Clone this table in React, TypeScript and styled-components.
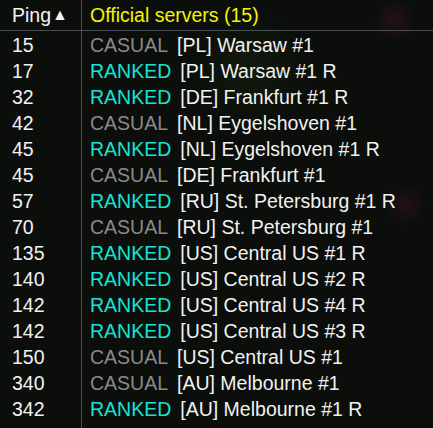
import React from "react";
import styled, { createGlobalStyle } from "styled-components";

const Global = createGlobalStyle`
  html, body { margin: 0; padding: 0; background: #0b0e0a; }
  body { width: 433px; height: 428px; overflow: hidden; }
`;

const Page = styled.div`
  width: 433px;
  height: 428px;
  display: flex;
  background:
    radial-gradient(circle at 395px 20px, rgba(90, 20, 60, 0.35) 0, rgba(90, 20, 60, 0) 22px),
    radial-gradient(circle at 405px 205px, rgba(90, 20, 60, 0.3) 0, rgba(90, 20, 60, 0) 22px),
    radial-gradient(circle at 250px 70px, rgba(30, 50, 20, 0.35) 0, rgba(30, 50, 20, 0) 60px),
    #0b0e0a;
  font-family: "Liberation Sans", Arial, sans-serif;
  font-size: 19.5px;
  color: #f2f2f2;
`;

const Column = styled.div<{ $main?: boolean }>`
  display: flex;
  flex-direction: column;
  width: ${(p) => (p.$main ? "auto" : "81px")};
  flex: ${(p) => (p.$main ? "1" : "none")};
  border-left: ${(p) => (p.$main ? "1px solid #4b4e55" : "none")};
`;

const HeadCell = styled.div<{ $main?: boolean }>`
  height: 30px;
  display: flex;
  align-items: center;
  padding-left: ${(p) => (p.$main ? "8px" : "12px")};
  border-bottom: 1px solid #4b4e55;
  color: ${(p) => (p.$main ? "#f5f500" : "#f2f2f2")};
  margin-bottom: 1px;
`;

const Cell = styled.div<{ $main?: boolean }>`
  height: 26px;
  display: flex;
  align-items: center;
  white-space: nowrap;
  padding-left: ${(p) => (p.$main ? "8px" : "12px")};
`;

const Kind = styled.span<{ $ranked: boolean }>`
  color: ${(p) => (p.$ranked ? "#16e3d4" : "#8a8a8a")};
  margin-right: 9px;
`;

const Arrow = styled.span`
  font-size: 16px;
  margin-left: 1px;
`;

const rows: [number, boolean, string][] = [
  [15, false, "[PL] Warsaw #1"],
  [17, true, "[PL] Warsaw #1 R"],
  [32, true, "[DE] Frankfurt #1 R"],
  [42, false, "[NL] Eygelshoven #1"],
  [45, true, "[NL] Eygelshoven #1 R"],
  [45, false, "[DE] Frankfurt #1"],
  [57, true, "[RU] St. Petersburg #1 R"],
  [70, false, "[RU] St. Petersburg #1"],
  [135, true, "[US] Central US #1 R"],
  [140, true, "[US] Central US #2 R"],
  [142, true, "[US] Central US #4 R"],
  [142, true, "[US] Central US #3 R"],
  [150, false, "[US] Central US #1"],
  [340, false, "[AU] Melbourne #1"],
  [342, true, "[AU] Melbourne #1 R"],
];

export default function App() {
  return (
    <Page>
      <Global />
      <Column>
        <HeadCell>
          Ping<Arrow>▲</Arrow>
        </HeadCell>
        {rows.map(([ping], i) => (
          <Cell key={i}>{ping}</Cell>
        ))}
      </Column>
      <Column $main>
        <HeadCell $main>Official servers (15)</HeadCell>
        {rows.map(([, ranked, name], i) => (
          <Cell $main key={i}>
            <Kind $ranked={ranked}>{ranked ? "RANKED" : "CASUAL"}</Kind>
            {name}
          </Cell>
        ))}
      </Column>
    </Page>
  );
}
